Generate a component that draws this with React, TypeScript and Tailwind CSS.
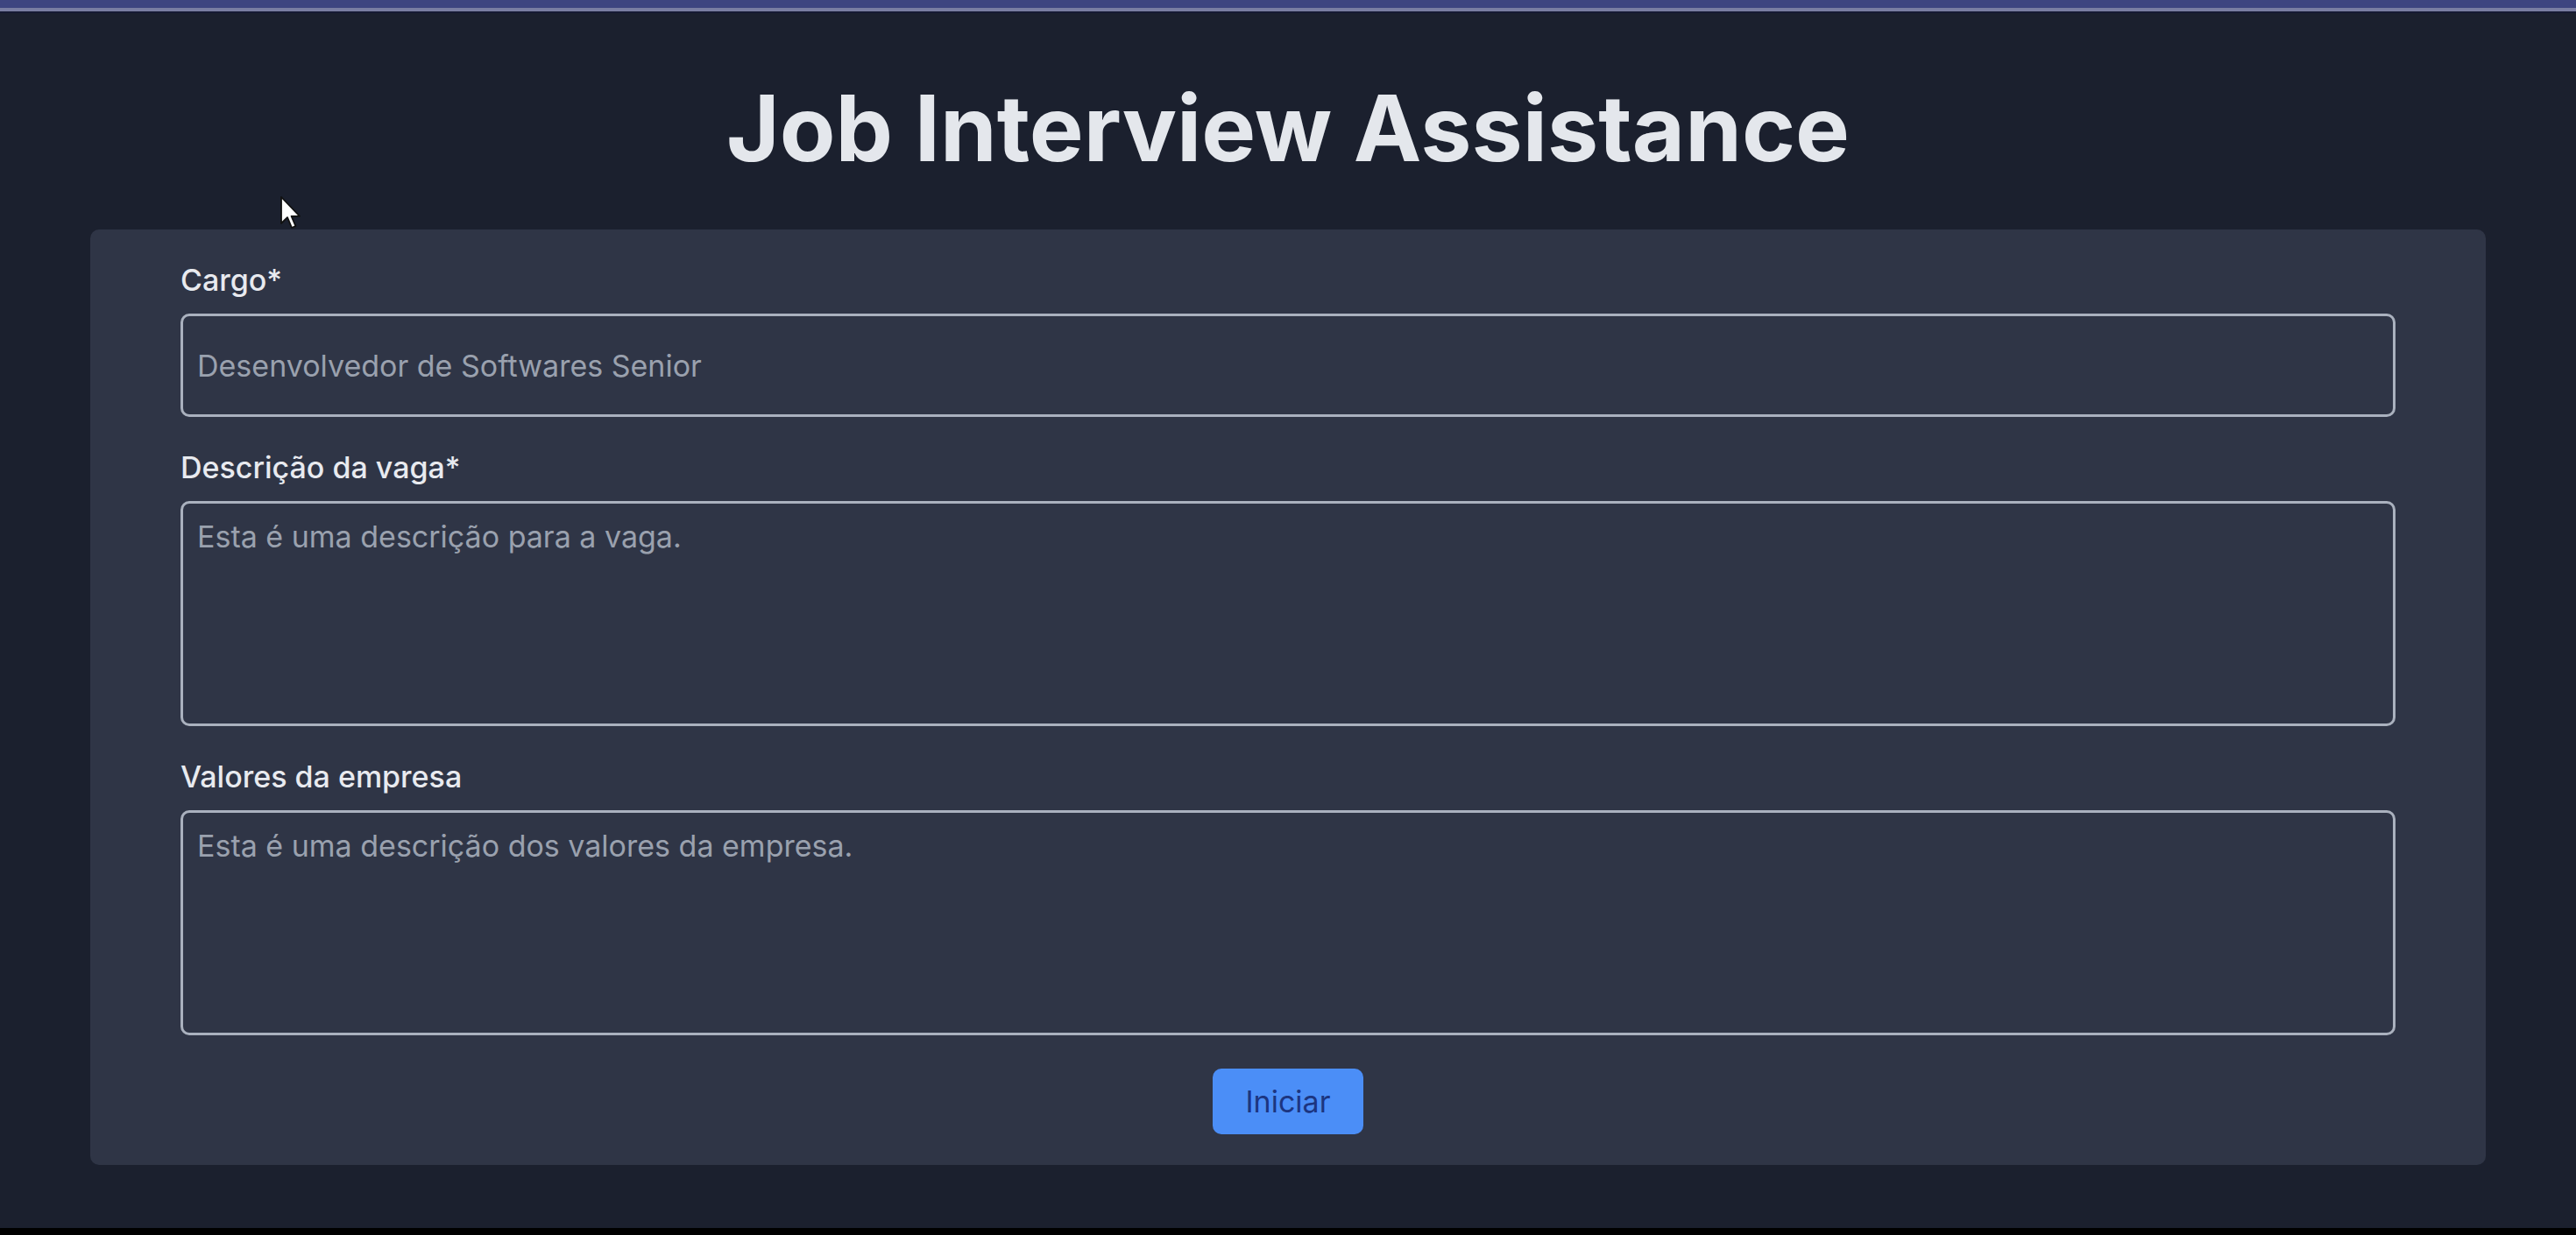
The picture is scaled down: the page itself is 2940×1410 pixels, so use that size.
import React, { useState } from 'react';

const font = { fontFamily: 'Inter, "Noto Sans", sans-serif' };

function Field({
  label,
  placeholder,
  multiline,
}: {
  label: string;
  placeholder: string;
  multiline?: boolean;
}) {
  const [value, setValue] = useState('');
  return (
    <div className="flex flex-col gap-[18px]">
      <label className="text-[34px] leading-[40px] font-medium text-[#e8eaef]">{label}</label>
      {multiline ? (
        <textarea
          className="h-[257px] w-full resize-none rounded-[10px] border-[3px] border-[#aab1be] bg-transparent px-[16px] pt-[13px] text-[34px] leading-[50px] text-gray-100 placeholder:text-[#9aa1ae] outline-none"
          placeholder={placeholder}
          value={value}
          onChange={(e) => setValue(e.target.value)}
        />
      ) : (
        <input
          className="h-[118px] w-full rounded-[10px] border-[3px] border-[#aab1be] bg-transparent px-[16px] text-[34px] text-gray-100 placeholder:text-[#9aa1ae] outline-none"
          placeholder={placeholder}
          value={value}
          onChange={(e) => setValue(e.target.value)}
        />
      )}
    </div>
  );
}

export default function App() {
  return (
    <div className="relative flex h-[1410px] flex-col bg-[#1b202e]" style={font}>
      {/* top strip from the recording */}
      <div className="h-[9px] bg-[#3e4580]" />
      <div className="h-[4px] bg-[#7a7ea2]" />
      <div className="h-[2px] bg-[#161a33]" />

      <main className="flex flex-1 flex-col">
        <h1 className="mt-[79px] text-center text-[104px] leading-none font-bold text-[#e4e7ec]">
          Job Interview Assistance
        </h1>

        <form
          className="mx-[103px] mt-[64px] flex flex-col gap-[38px] rounded-[10px] bg-[#2f3546] px-[103px] pt-[38px] pb-[35px]"
          onSubmit={(e) => e.preventDefault()}
        >
          <Field label="Cargo*" placeholder="Desenvolvedor de Softwares Senior" />
          <Field label="Descrição da vaga*" placeholder="Esta é uma descrição para a vaga." multiline />
          <Field label="Valores da empresa" placeholder="Esta é uma descrição dos valores da empresa." multiline />
          <div className="flex justify-center">
            <button
              type="submit"
              className="h-[75px] w-[172px] rounded-[10px] bg-[#4b8ef7] text-[34px] text-[#1c3580]"
            >
              Iniciar
            </button>
          </div>
        </form>
      </main>

      <div className="h-[8px] bg-black" />

      {/* mouse pointer captured in the recording */}
      <svg
        className="pointer-events-none absolute left-[319px] top-[223px]"
        width="24"
        height="40"
        viewBox="0 0 12 20"
      >
        <path
          d="M1 1 L1 16 L4.5 12.6 L7 18.5 L9.2 17.6 L6.8 11.9 L11.5 11.9 Z"
          fill="#ffffff"
          stroke="#111111"
          strokeWidth="0.9"
          strokeLinejoin="round"
        />
      </svg>
    </div>
  );
}
